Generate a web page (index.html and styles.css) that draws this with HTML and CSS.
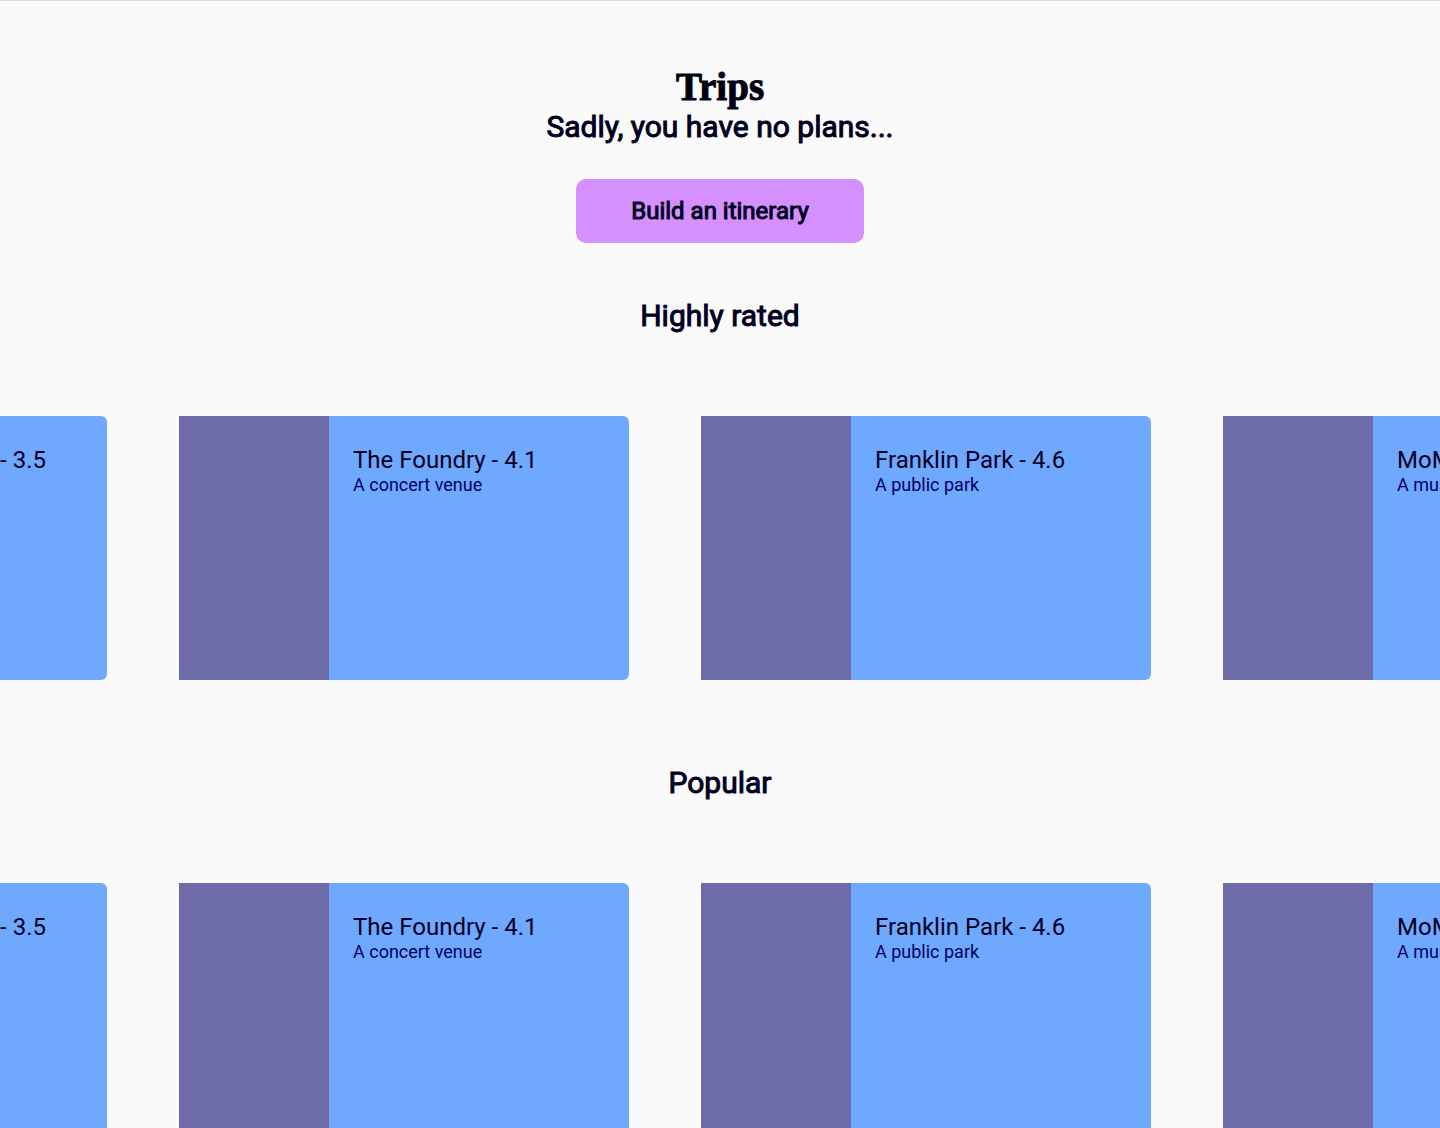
FILE: index.html
```
<!DOCTYPE html>
<html lang="en">
<head>
<meta charset="utf-8">
<meta name="viewport" content="width=device-width, initial-scale=1">
<title>Trips</title>
<link rel="stylesheet" href="styles.css">
</head>
<body>
<main class="page">
  <header class="hero">
    <h1 class="title">Trips</h1>
    <p class="lead">Sadly, you have no plans...</p>
    <button class="build" type="button">Build an itinerary</button>
  </header>

  <section class="section">
    <h2 class="heading">Highly rated</h2>
    <div class="carousel">
      <article class="card"><div class="thumb"></div><div class="info"><h3 class="name">Boston Theater - 3.5</h3><p class="kind">A theater</p></div></article>
      <article class="card"><div class="thumb"></div><div class="info"><h3 class="name">The Foundry - 4.1</h3><p class="kind">A concert venue</p></div></article>
      <article class="card"><div class="thumb"></div><div class="info"><h3 class="name">Franklin Park - 4.6</h3><p class="kind">A public park</p></div></article>
      <article class="card"><div class="thumb"></div><div class="info"><h3 class="name">MoMA - 4.5</h3><p class="kind">A museum</p></div></article>
    </div>
  </section>

  <section class="section">
    <h2 class="heading">Popular</h2>
    <div class="carousel">
      <article class="card"><div class="thumb"></div><div class="info"><h3 class="name">Boston Theater - 3.5</h3><p class="kind">A theater</p></div></article>
      <article class="card"><div class="thumb"></div><div class="info"><h3 class="name">The Foundry - 4.1</h3><p class="kind">A concert venue</p></div></article>
      <article class="card"><div class="thumb"></div><div class="info"><h3 class="name">Franklin Park - 4.6</h3><p class="kind">A public park</p></div></article>
      <article class="card"><div class="thumb"></div><div class="info"><h3 class="name">MoMA - 4.5</h3><p class="kind">A museum</p></div></article>
    </div>
  </section>
</main>
</body>
</html>
```
FILE: styles.css
```
* { box-sizing: border-box; }

body {
  margin: 0;
  background: #fafafa;
  color: #00001e;
  font-family: Roboto, "Liberation Sans", sans-serif;
}

h1, h2, h3, p { margin: 0; }

.page {
  border-top: 1px solid #d8d4f4;
  overflow: hidden;
}

.hero {
  display: flex;
  flex-direction: column;
  align-items: center;
  padding-top: 64px;
}

.title {
  font: 700 39px/44px "Liberation Serif", serif;
  color: #000010;
  -webkit-text-stroke: 1px currentColor;
}

.lead, .heading {
  font-size: 30px;
  font-weight: 400;
  line-height: 36px;
  text-align: center;
  -webkit-text-stroke: 1px currentColor;
}

.build {
  margin-top: 34px;
  width: 288px;
  height: 64px;
  border: 0;
  border-radius: 10px;
  background: #d68fff;
  color: inherit;
  font: 400 24px/28px Roboto, "Liberation Sans", sans-serif;
  -webkit-text-stroke: 1px currentColor;
  cursor: pointer;
}

.section { padding-top: 55px; }

.section + .section { padding-top: 85px; }

.carousel {
  display: flex;
  gap: 72px;
  margin: 82px 0 0 -343px;
}

.card {
  display: flex;
  flex: none;
  width: 450px;
  height: 264px;
  border-radius: 0 6px 6px 0;
  overflow: hidden;
  background: #6ea8ff;
}

.thumb {
  width: 150px;
  background: #6e6ca8;
}

.info { padding: 30px 24px; white-space: nowrap; }

.name { font-size: 24px; font-weight: 400; line-height: 28px; }

.kind { font-size: 18px; line-height: 22px; color: #000060; }
```
